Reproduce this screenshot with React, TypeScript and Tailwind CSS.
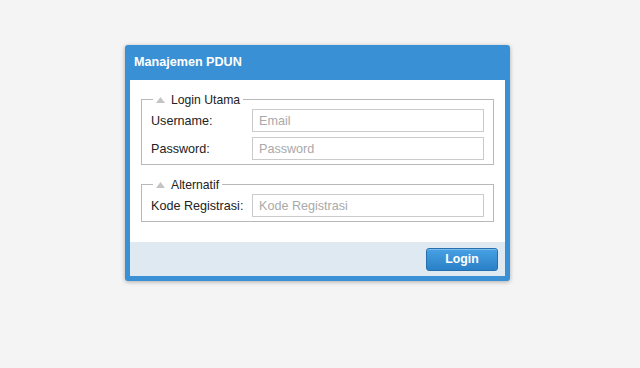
import React from "react";

function Tri() {
  return (
    <svg width="9" height="6" viewBox="0 0 9 6" className="inline-block">
      <path d="M0 6 L4.5 0 L9 6 Z" fill="#c4c4c4" />
    </svg>
  );
}

function Legend({ text }: { text: string }) {
  return (
    <legend className="ml-[2px] px-[3px] h-[16px] leading-[16px] text-[12.2px] text-[#222]">
      <span className="inline-flex items-center gap-[6px]">
        <Tri />
        <span>{text}</span>
      </span>
    </legend>
  );
}

function Row({ label, ph }: { label: string; ph: string }) {
  return (
    <div className="flex items-center">
      <label className="w-[101px] pt-[2px] text-[12.6px] text-[#222]">{label}</label>
      <input
        placeholder={ph}
        className="w-[232px] h-[23px] border border-[#cbcbcb] bg-white px-[6px] text-[12.6px] text-[#222] placeholder:text-[#a9a9a9] outline-none"
      />
    </div>
  );
}

export default function App() {
  return (
    <div
      className="w-[640px] h-[368px] bg-[#f4f4f4] pt-[45px] pl-[125px]"
      style={{ fontFamily: '"Liberation Sans", Arial, sans-serif' }}
    >
      <div className="w-[385px] rounded-[3px] bg-[#3a90d4] px-[5px] pb-[5px] shadow-[0_1px_4px_rgba(0,0,0,0.3)]">
        <div className="h-[35px] flex items-center px-[4px] text-white font-bold text-[12.6px]">
          Manajemen PDUN
        </div>
        <div className="bg-white px-[11px] pt-[11px] pb-[20px]">
          <fieldset className="border border-[#b8b8b8] px-[9px] pt-[2px] pb-[4px]">
            <Legend text="Login Utama" />
            <div className="flex flex-col gap-[5px]">
              <Row label="Username:" ph="Email" />
              <Row label="Password:" ph="Password" />
            </div>
          </fieldset>
          <fieldset className="mt-[11px] border border-[#b8b8b8] px-[9px] pt-[2px] pb-[4px]">
            <Legend text="Alternatif" />
            <Row label="Kode Registrasi:" ph="Kode Registrasi" />
          </fieldset>
        </div>
        <div className="h-[34px] bg-[#dfe9f2] flex items-start justify-end pt-[6px] pr-[7px]">
          <button className="w-[72px] h-[23px] rounded-[3px] border border-[#2470ae] bg-gradient-to-b from-[#47a1e4] to-[#2a80c6] text-white font-bold text-[12.3px] shadow-[inset_0_1px_0_rgba(255,255,255,0.3)]">
            Login
          </button>
        </div>
      </div>
    </div>
  );
}
